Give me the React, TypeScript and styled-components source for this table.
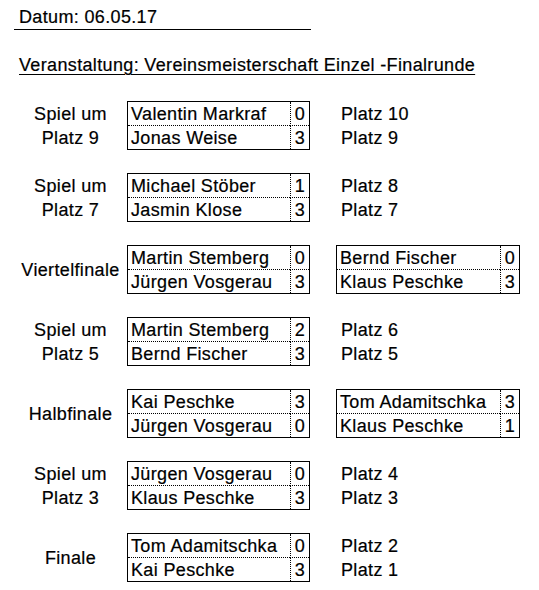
import React from "react";
import styled, { createGlobalStyle } from "styled-components";

const Global = createGlobalStyle`
  html, body { margin: 0; padding: 0; background: #fff; }
  body {
    font-family: "Liberation Sans", Arial, sans-serif;
    font-size: 18px;
    letter-spacing: 0.35px;
    color: #000;
    -webkit-text-stroke: 0.2px #000;
  }
`;

const Page = styled.div`
  padding: 5px 0 0 14px;
  width: 539px;
  box-sizing: border-box;
`;

const DateRow = styled.div`
  width: 297px;
  height: 25px;
  box-sizing: border-box;
  border-bottom: 1px solid #000;
  padding: 2px 0 0 5px;
  line-height: 21px;
  white-space: nowrap;
`;

const TitleRow = styled.div`
  margin-top: 23px;
  height: 24px;
  box-sizing: border-box;
  padding: 2px 0 0 5px;
  line-height: 21px;
  white-space: nowrap;
  margin-bottom: 24px;
`;

const Underlined = styled.span`
  text-decoration: underline;
  text-decoration-thickness: 1px;
  text-underline-offset: 3px;
`;

const Group = styled.div`
  display: flex;
  align-items: flex-start;
  height: 72px;
`;

const LabelCol = styled.div<{ $single?: boolean }>`
  width: 113px;
  height: 49px;
  display: flex;
  flex-direction: column;
  align-items: center;
  justify-content: ${(p) => (p.$single ? "center" : "flex-start")};
  padding-top: ${(p) => (p.$single ? "0" : "1px")};
  box-sizing: border-box;
  white-space: nowrap;
`;

const LabelLine = styled.div`
  height: 24px;
  box-sizing: border-box;
  padding-top: 2px;
  line-height: 21px;
`;

const SingleLabel = styled.div`
  line-height: 24px;
`;

const Match = styled.div<{ $nameW: number }>`
  display: grid;
  grid-template-columns: ${(p) => p.$nameW}px 19px;
  border: 1px solid #000;
  width: fit-content;
`;

const Cell = styled.div<{ $first?: boolean; $score?: boolean }>`
  height: ${(p) => (p.$first ? "24px" : "23px")};
  box-sizing: border-box;
  padding: 2px 0 0 ${(p) => (p.$score ? "0" : "3px")};
  line-height: 21px;
  white-space: nowrap;
  overflow: hidden;
  text-align: ${(p) => (p.$score ? "center" : "left")};
  border-bottom: ${(p) => (p.$first ? "1px dotted #000" : "none")};
  border-left: ${(p) => (p.$score ? "1px dotted #000" : "none")};
`;

const Gap = styled.div`
  width: 26px;
  flex: none;
`;

const PlaceCol = styled.div`
  padding-top: 1px;
  white-space: nowrap;
`;

const PlaceLine = styled.div`
  height: 24px;
  box-sizing: border-box;
  padding: 2px 0 0 5px;
  line-height: 21px;
`;

type Player = [string, number];

const MatchBox = ({ players, nameW }: { players: Player[]; nameW: number }) => (
  <Match $nameW={nameW}>
    <Cell $first>{players[0][0]}</Cell>
    <Cell $first $score>{players[0][1]}</Cell>
    <Cell>{players[1][0]}</Cell>
    <Cell $score>{players[1][1]}</Cell>
  </Match>
);

type Round = {
  label: string[];
  match: Player[];
  right: { places?: string[]; match?: Player[] };
};

const rounds: Round[] = [
  {
    label: ["Spiel um", "Platz 9"],
    match: [["Valentin Markraf", 0], ["Jonas Weise", 3]],
    right: { places: ["Platz 10", "Platz 9"] },
  },
  {
    label: ["Spiel um", "Platz 7"],
    match: [["Michael Stöber", 1], ["Jasmin Klose", 3]],
    right: { places: ["Platz 8", "Platz 7"] },
  },
  {
    label: ["Viertelfinale"],
    match: [["Martin Stemberg", 0], ["Jürgen Vosgerau", 3]],
    right: { match: [["Bernd Fischer", 0], ["Klaus Peschke", 3]] },
  },
  {
    label: ["Spiel um", "Platz 5"],
    match: [["Martin Stemberg", 2], ["Bernd Fischer", 3]],
    right: { places: ["Platz 6", "Platz 5"] },
  },
  {
    label: ["Halbfinale"],
    match: [["Kai Peschke", 3], ["Jürgen Vosgerau", 0]],
    right: { match: [["Tom Adamitschka", 3], ["Klaus Peschke", 1]] },
  },
  {
    label: ["Spiel um", "Platz 3"],
    match: [["Jürgen Vosgerau", 0], ["Klaus Peschke", 3]],
    right: { places: ["Platz 4", "Platz 3"] },
  },
  {
    label: ["Finale"],
    match: [["Tom Adamitschka", 0], ["Kai Peschke", 3]],
    right: { places: ["Platz 2", "Platz 1"] },
  },
];

export default function App() {
  return (
    <Page>
      <Global />
      <DateRow>Datum: 06.05.17</DateRow>
      <TitleRow>
        <Underlined>Veranstaltung: Vereinsmeisterschaft Einzel -Finalrunde</Underlined>
      </TitleRow>
      {rounds.map((r, i) => (
        <Group key={i}>
          {r.label.length === 1 ? (
            <LabelCol $single>
              <SingleLabel>{r.label[0]}</SingleLabel>
            </LabelCol>
          ) : (
            <LabelCol>
              {r.label.map((l) => (
                <LabelLine key={l}>{l}</LabelLine>
              ))}
            </LabelCol>
          )}
          <MatchBox players={r.match} nameW={162} />
          <Gap />
          {r.right.match ? (
            <MatchBox players={r.right.match} nameW={163} />
          ) : (
            <PlaceCol>
              {r.right.places!.map((p) => (
                <PlaceLine key={p}>{p}</PlaceLine>
              ))}
            </PlaceCol>
          )}
        </Group>
      ))}
    </Page>
  );
}
